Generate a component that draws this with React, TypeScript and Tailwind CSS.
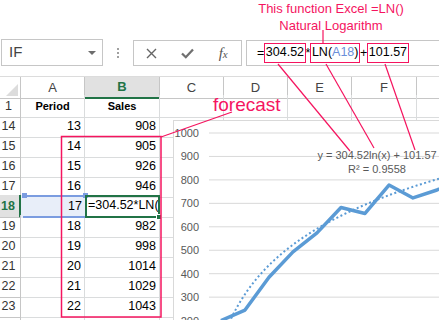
const cols = 'grid grid-cols-[21px_64px_75px_64px_64px_64px_65px_22px]';

const rows = [
  { n: '14', a: '13', b: '908' },
  { n: '15', a: '14', b: '905' },
  { n: '16', a: '15', b: '926' },
  { n: '17', a: '16', b: '946' },
  { n: '18', a: '17', b: '' },
  { n: '19', a: '18', b: '982' },
  { n: '20', a: '19', b: '998' },
  { n: '21', a: '20', b: '1014' },
  { n: '22', a: '21', b: '1029' },
  { n: '23', a: '22', b: '1043' },
  { n: '24', a: '', b: '' },
];

// chart scale (coords inside the chart box)
const sales = [200, 245, 385, 493, 574, 682, 657, 778, 723, 757, 800, 830];
const px = (k: number) => 35 + 24 * (k - 0.5);
const py = (v: number) => 12 + (1000 - v) * 0.2345;
const solid = sales.map((v, i) => `${px(i + 1)},${py(v)}`).join(' ');
const trend = Array.from({ length: 111 }, (_, i) => {
  const k = 1 + i * 0.1;
  return `${px(k)},${py(304.52 * Math.log(k) + 101.57)}`;
}).join(' ');
const ticks = [1000, 900, 800, 700, 600, 500, 400, 300, 200];

function Chart() {
  return (
    <div className="absolute left-[173px] top-[120px] w-[280px] h-[210px] border border-[#d9d9d9] bg-white">
      <svg width="280" height="210" className="block">
        {ticks.map((t) => (
          <g key={t}>
            <line x1="35" x2="280" y1={py(t)} y2={py(t)} stroke="#d9d9d9" strokeWidth="1" />
            <text x="25" y={py(t)} textAnchor="end" dominantBaseline="central" fontSize="11" fill="#595959" fontFamily="Liberation Sans, Arial, sans-serif">
              {t}
            </text>
          </g>
        ))}
        <polyline points={trend} fill="none" stroke="#5b9bd5" strokeWidth="2" strokeDasharray="2 2.5" />
        <polyline points={solid} fill="none" stroke="#5b9bd5" strokeWidth="3.5" strokeLinejoin="round" />
        <text x="203" y="33.5" textAnchor="middle" dominantBaseline="central" fontSize="11" fill="#595959" fontFamily="Liberation Sans, Arial, sans-serif">
          y = 304.52ln(x) + 101.57
        </text>
        <text x="203" y="48" textAnchor="middle" dominantBaseline="central" fontSize="11" fill="#595959" fontFamily="Liberation Sans, Arial, sans-serif">
          R² = 0.9558
        </text>
      </svg>
    </div>
  );
}

export default function App() {
  return (
    <div className="relative w-[439px] h-[320px] overflow-hidden bg-white font-['Liberation_Sans',Arial,sans-serif]">
      {/* note on top */}
      <div className="h-[39px] pl-[251px]">
        <div className="w-[160px] text-center text-[13px] leading-[17px] text-[#f5145f]">
          <p>This function Excel =LN()</p>
          <p>Natural Logarithm</p>
        </div>
      </div>

      {/* formula bar */}
      <div className="flex items-start h-[27px]">
        <div className="ml-[1px] w-[102px] h-[27px] border border-[#c6c6c6] flex items-center justify-between pl-[7px] pr-[6px]">
          <span className="text-[15px] text-[#444]">IF</span>
          <svg width="8" height="4"><path d="M0 0h8L4 4z" fill="#6d6d6d" /></svg>
        </div>
        <div className="w-[30px] h-[27px] flex flex-col items-center justify-center gap-[2px]">
          <span className="w-[2px] h-[2px] bg-[#a0a0a0]" />
          <span className="w-[2px] h-[2px] bg-[#a0a0a0]" />
          <span className="w-[2px] h-[2px] bg-[#a0a0a0]" />
        </div>
        <div className="mt-[1px] w-[109px] h-[26px] border border-[#c6c6c6] flex items-center">
          <div className="w-[36px] flex justify-center">
            <svg width="11" height="11"><path d="M1 1L10 10M10 1L1 10" stroke="#666" strokeWidth="1.4" /></svg>
          </div>
          <div className="w-[36px] flex justify-center">
            <svg width="13" height="11"><path d="M1 5.5L4.8 9.2L12 1.5" stroke="#707070" strokeWidth="2.3" fill="none" /></svg>
          </div>
          <div className="w-[36px] flex justify-center">
            <span className="italic font-['Liberation_Serif',serif] text-[15px] leading-none text-[#555]">
              f<span className="text-[11px]">x</span>
            </span>
          </div>
        </div>
        <div className="mt-[1px] ml-[4px] flex-1 h-[26px] border-y border-l border-[#c6c6c6] pl-[10px] flex items-center text-[12.5px] text-black whitespace-nowrap">
          <span>=</span>
          <span className="inline-block h-[20px] leading-[17px] border-[1.5px] border-[#f5145f] px-[0.5px]">304.52</span>
          <span>*</span>
          <span className="inline-block h-[20px] leading-[17px] border-[1.5px] border-[#f5145f] px-[0.5px]">
            LN(<span className="text-[#6b8fd9]">A18</span>)
          </span>
          <span>+</span>
          <span className="inline-block h-[20px] leading-[17px] border-[1.5px] border-[#f5145f] px-[0.5px]">101.57</span>
        </div>
      </div>

      <div className="h-[10px]" />

      {/* sheet */}
      <div className={`${cols} h-[19px] text-[13px] text-[#444] border-t border-[#dcdcdc]`}>
        <div className="relative border-r border-b border-[#c6c6c6]">
          <svg width="12" height="12" className="absolute right-[2px] bottom-[2px]"><path d="M12 0V12H0z" fill="#dcdcdc" /></svg>
        </div>
        <div className="flex items-center justify-center border-r border-b border-[#c6c6c6]">A</div>
        <div className="flex items-center justify-center bg-[#e1e1e1] border-r border-[#c6c6c6] border-b-2 border-b-[#217346] font-bold text-[#217346]">B</div>
        <div className="flex items-center justify-center border-r border-b border-[#c6c6c6]">C</div>
        <div className="flex items-center justify-center border-r border-b border-[#c6c6c6]">D</div>
        <div className="flex items-center justify-center border-r border-b border-[#c6c6c6]">E</div>
        <div className="flex items-center justify-center border-r border-b border-[#c6c6c6]">F</div>
        <div className="border-b border-[#c6c6c6]" />
      </div>

      <div className={`${cols} h-[20px] text-[11px] leading-[22px] font-bold text-black`}>
        <div className="pr-[3px] text-center text-[12.5px] font-normal text-[#333] border-r border-b border-[#c6c6c6]">1</div>
        <div className="text-center border-r border-b border-[#dadcdd]">Period</div>
        <div className="text-center border-r border-b border-[#dadcdd]">Sales</div>
        <div className="border-r border-b border-[#dadcdd]" />
        <div className="border-r border-b border-[#dadcdd]" />
        <div className="border-r border-b border-[#dadcdd]" />
        <div className="border-r border-b border-[#dadcdd]" />
        <div className="border-b border-[#dadcdd]" />
      </div>

      {rows.map((r) => {
        const sel = r.n === '18';
        return (
          <div key={r.n} className={`${cols} h-[20px] text-[12.5px] leading-[22px] text-black`}>
            {sel ? (
              <div className="pr-[3px] text-center font-bold text-[#217346] bg-[#e1e1e1] border-r-2 border-r-[#217346] border-b border-[#c6c6c6]">{r.n}</div>
            ) : (
              <div className="pr-[3px] text-center text-[#333] border-r border-b border-[#c6c6c6]">{r.n}</div>
            )}
            {sel ? (
              <div className="relative text-right pr-[3px] bg-[#e8eef9]">
                <div className="absolute left-[2px] right-0 top-0 bottom-0 border-y-2 border-[#7b9ce0]" />
                <span className="absolute left-[1px] top-[-2px] w-[5px] h-[5px] bg-[#7b9ce0]" />
                <span className="absolute right-[-3px] top-[-2px] w-[5px] h-[5px] bg-[#7b9ce0]" />
                <span className="relative">{r.a}</span>
              </div>
            ) : (
              <div className="text-right pr-[3px] border-r border-b border-[#dadcdd]">{r.a}</div>
            )}
            {sel ? (
              <div className="relative border-2 border-[#217346] pl-[1px] leading-[16px] overflow-visible">
                <div className="overflow-hidden whitespace-nowrap">=304.52*LN(A18)+101.57</div>
                <span className="absolute right-[-4px] bottom-[-4px] w-[6px] h-[6px] bg-[#217346] border border-white" />
              </div>
            ) : (
              <div className="text-right pr-[3px] border-r border-b border-[#dadcdd]">{r.b}</div>
            )}
            <div className="border-r border-b border-[#dadcdd]" />
            <div className="border-r border-b border-[#dadcdd]" />
            <div className="border-r border-b border-[#dadcdd]" />
            <div className="border-r border-b border-[#dadcdd]" />
            <div className="border-b border-[#dadcdd]" />
          </div>
        );
      })}

      <Chart />

      {/* callouts */}
      <svg width="439" height="320" className="absolute left-0 top-0 pointer-events-none">
        <g stroke="#f5145f" strokeWidth="1.2" fill="none">
          <line x1="323" y1="30" x2="323" y2="43" />
          <line x1="278" y1="64" x2="350" y2="151" />
          <line x1="326" y1="64" x2="374" y2="148" />
          <line x1="385" y1="64" x2="415" y2="150" />
          <line x1="161" y1="137" x2="232" y2="112" />
          <rect x="61.5" y="136.5" width="99.5" height="180.5" strokeWidth="1.5" />
        </g>
      </svg>
      <div className="absolute left-[213px] top-[94px] text-[19px] leading-[22px] text-[#f5145f]">forecast</div>
    </div>
  );
}
